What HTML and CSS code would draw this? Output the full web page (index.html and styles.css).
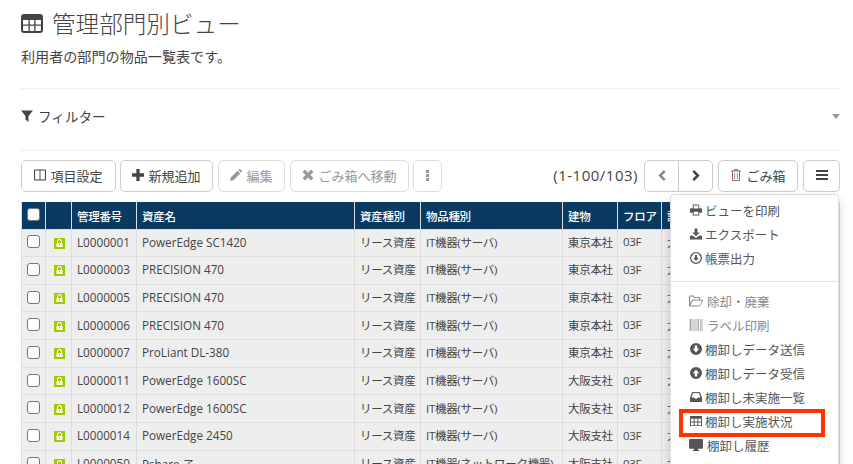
FILE: index.html
```html
<!DOCTYPE html>
<html lang="ja">
<head>
    <meta charset="UTF-8">
    <title>管理部門別ビュー</title>
    <link rel="stylesheet" href="styles.css">
</head>
<body>
    <svg class="sprite" width="0" height="0">
        <symbol id="i-table" viewBox="0 0 22 19"><path fill-rule="evenodd" d="M3 0h16a3 3 0 0 1 3 3v13a3 3 0 0 1-3 3H3a3 3 0 0 1-3-3V3a3 3 0 0 1 3-3zM2 6v4.500h5.500V6zm6.800 0v4.500h4.400V6zm5.700 0v4.500H20V6zM2 11.800V16a1 1 0 0 0 1 1h4.500v-5.200zm6.800 0V17h4.400v-5.200zm5.700 0V17H19a1 1 0 0 0 1-1v-4.200z"/></symbol>
        <symbol id="i-filter" viewBox="0 0 12 12"><path d="M0 .5h12L7.500 6v6L4.500 9.500V6z"/></symbol>
        <symbol id="i-columns" viewBox="0 0 13 12"><path fill-rule="evenodd" d="M1 0h11a1 1 0 0 1 1 1v10a1 1 0 0 1-1 1H1a1 1 0 0 1-1-1V1a1 1 0 0 1 1-1zm.2 1.200v9.600H6V1.200zm5.800 0v9.600h4.800V1.200z"/></symbol>
        <symbol id="i-plus" viewBox="0 0 11 11"><path d="M4 0h3v4h4v3H7v4H4V7H0V4h4z"/></symbol>
        <symbol id="i-pencil" viewBox="0 0 12 12"><path d="M0 12l.8-3.500L7.500 1.800l2.700 2.700-6.700 6.700zM8.300 1L9.300 0q.4-.2.700 0l2 2q.2.300 0 .7L11 3.700z"/></symbol>
        <symbol id="i-times" viewBox="0 0 10 10"><path d="M2.500.5L5 3 7.500.5l2 2L7 5l2.500 2.500-2 2L5 7 2.500 9.500l-2-2L3 5 .5 2.500z"/></symbol>
        <symbol id="i-dots" viewBox="0 0 3 11"><path d="M0 0h3v3H0zM0 4h3v3H0zM0 8h3v3H0z"/></symbol>
        <symbol id="i-left" viewBox="0 0 8 12"><path d="M6 0l2 2-4 4 4 4-2 2-6-6z"/></symbol>
        <symbol id="i-right" viewBox="0 0 8 12"><path d="M2 0L0 2l4 4-4 4 2 2 6-6z"/></symbol>
        <symbol id="i-trash" viewBox="0 0 10 12"><path fill-rule="evenodd" d="M3.500 0h3l.6 1.500H10v1H9V11a1 1 0 0 1-1 1H2a1 1 0 0 1-1-1V2.500H0v-1h2.900zM2 2.500V11h6V2.500zM3.300 4h.8v6h-.8zm2.600 0h.8v6h-.8zM4 1.500h2L5.800 1H4.200z"/></symbol>
        <symbol id="i-bars" viewBox="0 0 12 10"><path d="M0 0h12v2H0zM0 4h12v2H0zM0 8h12v2H0z"/></symbol>
        <symbol id="i-print" viewBox="0 0 13 12"><path fill-rule="evenodd" d="M3 0h6l1 1v3h1.500A1.500 1.500 0 0 1 13 5.500V9h-3v3H3V9H0V5.500A1.500 1.500 0 0 1 1.500 4H3zm1 1v3.500h5V1zm0 7v3h5V8z"/></symbol>
        <symbol id="i-export" viewBox="0 0 13 12"><path d="M5 0h3v4.500h2.500L6.500 8.500l-4-4H5zM0 8h3.500l3 2.500 3-2.500H13v4H0z"/></symbol>
        <symbol id="i-circle-down-o" viewBox="0 0 12 12"><path fill-rule="evenodd" d="M6 0a6 6 0 1 1 0 12A6 6 0 0 1 6 0zm0 1.300a4.700 4.700 0 1 0 0 9.400 4.700 4.700 0 0 0 0-9.400zM5 3h2v3h1.800L6 9 3.200 6H5z"/></symbol>
        <symbol id="i-folder" viewBox="0 0 14 11"><path fill-rule="evenodd" d="M1 0h3.500l1 1.500H10a1 1 0 0 1 1 1V4h2a1 1 0 0 1 .8 1.500L11 10.500a1 1 0 0 1-.8.500H1a1 1 0 0 1-1-1V1a1 1 0 0 1 1-1zm0 1v7l2-3.500A1 1 0 0 1 4 4h6V2.500H5L4 1zm3 4L1.300 10h9.400L13 5z"/></symbol>
        <symbol id="i-barcode" viewBox="0 0 13 12"><path d="M0 0h2v12H0zM3 0h1v12H3zM5 0h1v12H5zM7 0h1v12H7zM8.500 0h1v12h-1zM10.500 0h.8v12h-.8zM12 0h1v12h-1z"/></symbol>
        <symbol id="i-circle-down" viewBox="0 0 12 12"><path fill-rule="evenodd" d="M6 0a6 6 0 1 1 0 12A6 6 0 0 1 6 0zM4.700 2.500v3.300H2.800L6 9.500l3.200-3.700H7.300V2.500z"/></symbol>
        <symbol id="i-circle-up" viewBox="0 0 12 12"><path fill-rule="evenodd" d="M6 0a6 6 0 1 1 0 12A6 6 0 0 1 6 0zM4.700 9.500V6.200H2.800L6 2.500l3.200 3.700H7.300v3.300z"/></symbol>
        <symbol id="i-inbox" viewBox="0 0 13 11"><path fill-rule="evenodd" d="M3 0h7a1 1 0 0 1 .9.600L13 6v4a1 1 0 0 1-1 1H1a1 1 0 0 1-1-1V6L2.100.6A1 1 0 0 1 3 0zm.3 1.300L1.600 6h2.900l.8 1.500h2.400L8.500 6h2.900L9.700 1.300z"/></symbol>
        <symbol id="i-grid" viewBox="0 0 13 11"><path fill-rule="evenodd" d="M0 0h13v11H0zm1 3v3h3V3zm4 0v3h3V3zm4 0v3h3V3zM1 7v3h3V7zm4 0v3h3V7zm4 0v3h3V7z"/></symbol>
        <symbol id="i-desktop" viewBox="0 0 15 13"><path fill-rule="evenodd" d="M1 0h13a1 1 0 0 1 1 1v8.500a1 1 0 0 1-1 1H9.500l.5 1.500h1v1H4v-1h1l.5-1.500H1a1 1 0 0 1-1-1V1a1 1 0 0 1 1-1z"/></symbol>
        <symbol id="i-lock" viewBox="0 0 11 11"><path fill="#a2c800" d="M0 0h11v11H0z"/><path fill="#fff" d="M3 5V3.500a2.500 2.500 0 0 1 5 0V5h.5v4h-6V5zm1 0h3V3.500a1.500 1.500 0 0 0-3 0z"/><path fill="#a2c800" d="M5 6h1v1.500H5z"/></symbol>
    </svg>

    <div class="page">
        <h1 class="title"><svg class="title-icon"><use href="#i-table"/></svg>管理部門別ビュー</h1>
        <p class="lead">利用者の部門の物品一覧表です。</p>

        <div class="filter">
            <span class="filter-label"><svg class="ico"><use href="#i-filter"/></svg>フィルター</span>
            <span class="caret"></span>
        </div>

        <div class="toolbar">
            <button class="btn b-setting"><svg class="ico"><use href="#i-columns"/></svg>項目設定</button>
            <button class="btn b-new"><svg class="ico"><use href="#i-plus"/></svg>新規追加</button>
            <button class="btn off b-edit"><svg class="ico"><use href="#i-pencil"/></svg>編集</button>
            <button class="btn off b-move"><svg class="ico"><use href="#i-times"/></svg>ごみ箱へ移動</button>
            <button class="btn off b-more"><svg class="ico dots"><use href="#i-dots"/></svg></button>
            <span class="count">(1-100/103)</span>
            <div class="pager">
                <button class="btn b-page off-arrow"><svg class="ico"><use href="#i-left"/></svg></button>
                <button class="btn b-page"><svg class="ico"><use href="#i-right"/></svg></button>
            </div>
            <button class="btn b-trash"><svg class="ico trash"><use href="#i-trash"/></svg>ごみ箱</button>
            <button class="btn b-menu"><svg class="ico bars"><use href="#i-bars"/></svg></button>
        </div>

        <div class="table-wrap">
            <table class="list">
                <colgroup>
                    <col class="c1"><col class="c2"><col class="c3"><col class="c4"><col class="c5"><col class="c6"><col class="c7"><col class="c8"><col class="c9"><col>
                </colgroup>
                <thead>
                    <tr>
                        <th><span class="check head"></span></th>
                        <th></th>
                        <th>管理番号</th>
                        <th>資産名</th>
                        <th>資産種別</th>
                        <th>物品種別</th>
                        <th>建物</th>
                        <th>フロア</th>
                        <th>設置</th>
                        <th></th>
                    </tr>
                </thead>
                <tbody id="rows"></tbody>
            </table>

            <ul class="menu">
                <li><svg class="ico"><use href="#i-print"/></svg>ビューを印刷</li>
                <li><svg class="ico"><use href="#i-export"/></svg>エクスポート</li>
                <li><svg class="ico"><use href="#i-circle-down-o"/></svg>帳票出力</li>
                <li class="sep"></li>
                <li class="dim"><svg class="ico wide"><use href="#i-folder"/></svg>除却・廃棄</li>
                <li class="dim"><svg class="ico wide barcode"><use href="#i-barcode"/></svg>ラベル印刷</li>
                <li><svg class="ico"><use href="#i-circle-down"/></svg>棚卸しデータ送信</li>
                <li><svg class="ico"><use href="#i-circle-up"/></svg>棚卸しデータ受信</li>
                <li><svg class="ico"><use href="#i-inbox"/></svg>棚卸し未実施一覧</li>
                <li class="marked"><svg class="ico"><use href="#i-grid"/></svg>棚卸し実施状況</li>
                <li><svg class="ico wide"><use href="#i-desktop"/></svg>棚卸し履歴</li>
                <li><svg class="ico"><use href="#i-grid"/></svg>棚卸しマスタ一括</li>
            </ul>
        </div>
    </div>

    <script src="rows.js"></script>
</body>
</html>
```

FILE: rows.js
```js
const data = [
    ['L0000001', 'PowerEdge SC1420', 'IT機器(サーバ)', '東京本社'],
    ['L0000003', 'PRECISION 470', 'IT機器(サーバ)', '東京本社'],
    ['L0000005', 'PRECISION 470', 'IT機器(サーバ)', '東京本社'],
    ['L0000006', 'PRECISION 470', 'IT機器(サーバ)', '東京本社'],
    ['L0000007', 'ProLiant DL-380', 'IT機器(サーバ)', '東京本社'],
    ['L0000011', 'PowerEdge 1600SC', 'IT機器(サーバ)', '大阪支社'],
    ['L0000012', 'PowerEdge 1600SC', 'IT機器(サーバ)', '大阪支社'],
    ['L0000014', 'PowerEdge 2450', 'IT機器(サーバ)', '大阪支社'],
    ['L0000050', 'Pshare 子', 'IT機器(ネットワーク機器)', '大阪支社']
];

document.getElementById('rows').innerHTML = data.map((r) => `
    <tr>
        <td><span class="check"></span></td>
        <td><svg class="lock"><use href="#i-lock"/></svg></td>
        <td class="latin">${r[0]}</td>
        <td class="latin">${r[1]}</td>
        <td>リース資産</td>
        <td>${r[2]}</td>
        <td>${r[3]}</td>
        <td>03F</td>
        <td>大会議</td>
        <td></td>
    </tr>`).join('');
```

FILE: styles.css
```css
* {
    box-sizing: border-box;
}

html, body {
    margin: 0;
    height: 464px;
    overflow: hidden;
}

body {
    font-family: "Open Sans", "Noto Sans CJK JP", sans-serif;
    color: #444;
    background-color: white;
}

.sprite {
    position: absolute;
}

.page {
    padding: 0 13px 0 21px;
}

.ico {
    fill: currentColor;
    width: 12px;
    height: 12px;
    flex: none;
}

/* heading */
.title {
    display: flex;
    align-items: center;
    margin: 0;
    height: 46px;
    font-size: 23.6px;
    font-weight: 300;
    color: #444;
}

.title-icon {
    width: 22px;
    height: 19px;
    margin-right: 9px;
    fill: #444;
}

.lead {
    margin: 0;
    height: 42px;
    padding-top: 1px;
    font-size: 14.1px;
    line-height: 20px;
}

/* filter bar */
.filter {
    display: flex;
    align-items: center;
    justify-content: space-between;
    height: 63px;
    padding-bottom: 7px;
    border-top: 1px solid #eee;
    border-bottom: 1px solid #eee;
    font-size: 13.6px;
}

.filter-label {
    display: flex;
    align-items: center;
    gap: 5px;
}

.caret {
    width: 0;
    height: 0;
    border: 4.5px solid transparent;
    border-top: 5px solid #999;
    border-bottom: 0;
}

/* toolbar */
.toolbar {
    display: flex;
    align-items: center;
    height: 32px;
    margin-top: 9px;
    margin-bottom: 10px;
}

.btn {
    display: flex;
    align-items: center;
    justify-content: center;
    height: 32px;
    padding: 0 0 2px;
    background: white;
    border: 1px solid #ccc;
    border-radius: 5px;
    font-family: inherit;
    font-size: 13px;
    color: #444;
}

.btn .ico {
    margin-right: 4px;
}

.btn.off {
    color: #999;
    border-color: #ddd;
}

.b-setting { width: 95px; margin-right: 4px; }
.b-new { width: 93px; margin-right: 5px; }
.b-edit { width: 67px; margin-right: 5px; }
.b-move { width: 119px; margin-right: 4px; }
.b-more { width: 29px; }

.btn .dots {
    width: 3px;
    height: 11px;
    margin: 0;
}

.count {
    margin-left: auto;
    margin-right: 6px;
    padding-bottom: 3px;
    font-size: 15px;
    letter-spacing: 0.5px;
}

.pager {
    display: flex;
    margin-right: 5px;
}

.b-page {
    width: 35px;
    border-radius: 0 5px 5px 0;
}

.b-page:first-child {
    width: 34px;
    border-right: 0;
    border-radius: 5px 0 0 5px;
}

.btn.b-page .ico {
    margin: 0;
    height: 11px;
}

.off-arrow {
    color: #888;
}

.b-trash {
    width: 80px;
    margin-right: 5px;
}

.btn .trash {
    color: #8a6a5a;
}

.b-menu {
    width: 37px;
}

.btn .bars {
    margin: 0;
    height: 10px;
}

/* table */
.table-wrap {
    position: relative;
}

.list {
    width: 819px;
    table-layout: fixed;
    border-collapse: collapse;
    font-size: 11.5px;
    letter-spacing: -0.3px;
}

.c1 { width: 24px; }
.c2 { width: 26px; }
.c3 { width: 65px; }
.c4 { width: 218px; }
.c5 { width: 66px; }
.c6 { width: 142px; }
.c7 { width: 55px; }
.c8 { width: 44px; }
.c9 { width: 100px; }

.list th {
    height: 27px;
    padding: 2px 5px 0;
    text-align: left;
    font-weight: 500;
    color: white;
    background-color: #0a3a62;
    border: 1px solid #ddd;
    border-top: 0;
    white-space: nowrap;
    overflow: hidden;
}

.list td {
    height: 27.67px;
    padding: 0 5px 2px;
    background-color: #eee;
    border: 1px solid #ddd;
    white-space: nowrap;
    overflow: hidden;
}

.list td.latin {
    font-size: 11.7px;
    letter-spacing: 0;
}

.check {
    display: block;
    width: 13px;
    height: 13px;
    background: white;
    border: 1px solid #777;
    border-radius: 3px;
}

.check.head {
    margin-top: -3px;
}

.lock {
    display: block;
    width: 11px;
    height: 11px;
    margin: 3px 0 0 3px;
}

/* dropdown */
.menu {
    position: absolute;
    top: -8px;
    right: 1px;
    width: 169px;
    height: 300px;
    margin: 0;
    padding: 3px 0;
    list-style: none;
    background: white;
    border: 1px solid #ddd;
    border-radius: 4px;
    box-shadow: 0 6px 12px rgba(0, 0, 0, 0.18);
    font-size: 12.5px;
    color: #555;
}

.menu li {
    display: flex;
    align-items: center;
    gap: 3px;
    position: relative;
    height: 24px;
    padding-left: 19px;
}

.menu li.sep {
    height: 1px;
    margin: 11px 0 7px;
    padding: 0;
    background-color: #e5e5e5;
}

.menu .wide {
    width: 14px;
    margin: 0 1px 0 -1px;
}

.menu .dim {
    color: #888;
}

.menu .barcode {
    fill: #aaa;
}

.menu .marked::after {
    content: "";
    position: absolute;
    left: 8px;
    right: 13px;
    top: 0;
    bottom: -4px;
    border: 4px solid #ff3300;
}
```
